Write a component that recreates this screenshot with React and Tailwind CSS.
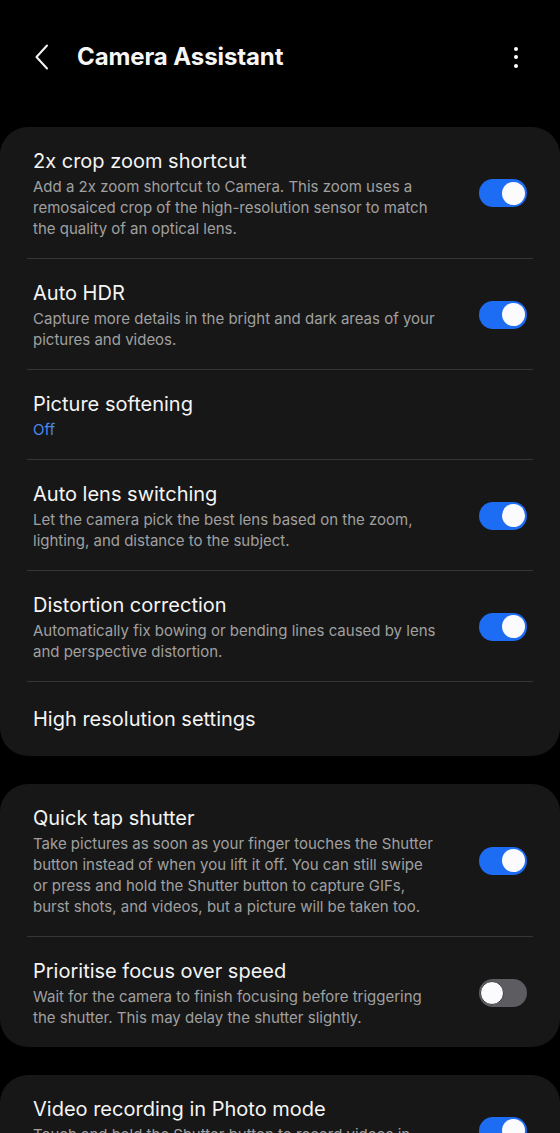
import React from "react";

const FONT = { fontFamily: "Inter, Roboto, 'Noto Sans', 'Liberation Sans', sans-serif" };

function Toggle({ on }) {
  if (on) {
    return (
      <div className="w-[48px] h-[28px] rounded-full bg-[#1c6cf4] flex items-center justify-end pr-[2px] shrink-0">
        <div className="w-[23px] h-[23px] rounded-full bg-[#fbfbfd]" />
      </div>
    );
  }
  return (
    <div className="w-[48px] h-[28px] rounded-full bg-[#5d5d61] flex items-center justify-start pl-[1px] shrink-0">
      <div className="w-[24px] h-[24px] rounded-full bg-[#fbfbfd] border-[1.5px] border-[#3d3d40]" />
    </div>
  );
}

function Row({ title, desc, sub, toggle, last, single }) {
  return (
    <div>
      <div
        className={
          "flex items-center pl-[33px] pr-[33px] " +
          (single ? "h-[74px]" : "pt-[20px] pb-[19px]")
        }
      >
        <div className="flex-1 min-w-0">
          <div className="text-[20px] leading-[29px] text-[#f4f4f4]">{title}</div>
          {desc && (
            <div className="text-[15px] leading-[21px] text-[#a0a0a0] w-[405px]">{desc}</div>
          )}
          {sub && <div className="text-[15px] leading-[21px] text-[#4a89ea]">{sub}</div>}
        </div>
        {toggle !== undefined && <Toggle on={toggle} />}
      </div>
      {!last && <div className="mx-[27px] h-px bg-[#363636]" />}
    </div>
  );
}

function Card({ children }) {
  return <div className="bg-[#171717] rounded-[28px] overflow-hidden">{children}</div>;
}

export default function App() {
  return (
    <div className="w-[560px] h-[1133px] bg-black overflow-hidden" style={FONT}>
      <div className="h-[114px] flex items-center">
        <div className="w-[77px] flex justify-center pl-[6px]">
          <svg width="16" height="26" viewBox="0 0 16 26" fill="none">
            <path d="M13 1.5 L2.5 13 L13 24.5" stroke="#f4f4f4" strokeWidth="2" strokeLinecap="round" strokeLinejoin="round" />
          </svg>
        </div>
        <div className="text-[24px] font-bold text-[#f6f6f6] tracking-[-0.1px]">Camera Assistant</div>
        <div className="ml-auto mr-[42px] flex flex-col items-center gap-[4.5px]">
          <div className="w-[4px] h-[4px] rounded-full bg-white" />
          <div className="w-[4px] h-[4px] rounded-full bg-white" />
          <div className="w-[4px] h-[4px] rounded-full bg-white" />
        </div>
      </div>
      <div className="pt-[13px] flex flex-col gap-[28px]">
        <Card>
          <Row
            title="2x crop zoom shortcut"
            desc="Add a 2x zoom shortcut to Camera. This zoom uses a remosaiced crop of the high-resolution sensor to match the quality of an optical lens."
            toggle={true}
          />
          <Row
            title="Auto HDR"
            desc="Capture more details in the bright and dark areas of your pictures and videos."
            toggle={true}
          />
          <Row title="Picture softening" sub="Off" />
          <Row
            title="Auto lens switching"
            desc="Let the camera pick the best lens based on the zoom, lighting, and distance to the subject."
            toggle={true}
          />
          <Row
            title="Distortion correction"
            desc="Automatically fix bowing or bending lines caused by lens and perspective distortion."
            toggle={true}
          />
          <Row title="High resolution settings" single last />
        </Card>
        <Card>
          <Row
            title="Quick tap shutter"
            desc="Take pictures as soon as your finger touches the Shutter button instead of when you lift it off. You can still swipe or press and hold the Shutter button to capture GIFs, burst shots, and videos, but a picture will be taken too."
            toggle={true}
          />
          <Row
            title="Prioritise focus over speed"
            desc="Wait for the camera to finish focusing before triggering the shutter. This may delay the shutter slightly."
            toggle={false}
            last
          />
        </Card>
        <Card>
          <Row
            title="Video recording in Photo mode"
            desc="Touch and hold the Shutter button to record videos in Photo mode."
            toggle={true}
            last
          />
        </Card>
      </div>
    </div>
  );
}
